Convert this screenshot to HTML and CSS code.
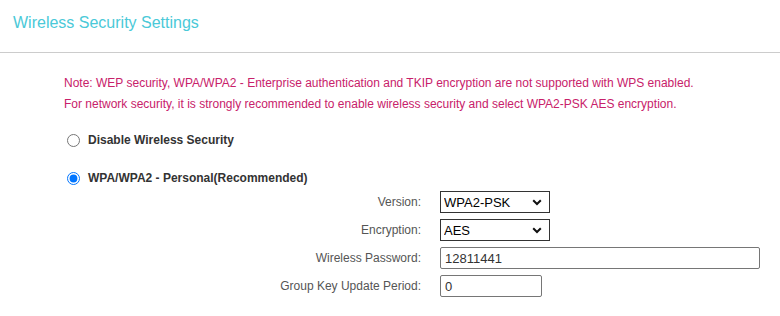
FILE: index.html
```html
<!DOCTYPE html>
<html>
<head>
<meta charset="utf-8">
<link rel="stylesheet" href="styles.css">
</head>
<body>
<div class="header"><h1 class="title">Wireless Security Settings</h1></div>
<div class="content">
  <div class="note">
    <p>Note: WEP security, WPA/WPA2 - Enterprise authentication and TKIP encryption are not supported with WPS enabled.</p>
    <p>For network security, it is strongly recommended to enable wireless security and select WPA2-PSK AES encryption.</p>
  </div>
  <label class="option opt-disable"><input type="radio" name="sec" class="radio"><span>Disable Wireless Security</span></label>
  <label class="option opt-wpa"><input type="radio" name="sec" class="radio" checked><span>WPA/WPA2 - Personal(Recommended)</span></label>
  <div class="form">
    <div class="lbl">Version:</div>
    <div class="sel-wrap">
      <select class="sel"><option>WPA2-PSK</option></select>
      <svg class="chev" width="10" height="7" viewBox="0 0 10 7"><path d="M1.2 1.2 L5 5 L8.8 1.2" fill="none" stroke="#111" stroke-width="2"/></svg>
    </div>
    <div class="lbl">Encryption:</div>
    <div class="sel-wrap">
      <select class="sel"><option>AES</option></select>
      <svg class="chev" width="10" height="7" viewBox="0 0 10 7"><path d="M1.2 1.2 L5 5 L8.8 1.2" fill="none" stroke="#111" stroke-width="2"/></svg>
    </div>
    <div class="lbl">Wireless Password:</div>
    <input class="txt txt-wide" type="text" value="12811441">
    <div class="lbl">Group Key Update Period:</div>
    <input class="txt txt-short" type="text" value="0">
  </div>
</div>
</body>
</html>
```

FILE: styles.css
```css
html, body {
  margin: 0;
  padding: 0;
  background: #fff;
  font-family: "Liberation Sans", Arial, sans-serif;
}
.header {
  height: 53px;
  border-bottom: 1px solid #cccccc;
  box-sizing: border-box;
  padding: 13px 0 0 13px;
}
.title {
  margin: 0;
  font-size: 16px;
  font-weight: normal;
  color: #4ac9d8;
  line-height: 20px;
}
.content {
  padding: 20px 0 0 64px;
  display: flex;
  flex-direction: column;
}
.note p {
  margin: 0;
  font-size: 12px;
  line-height: 21px;
  color: #c8216a;
}
.option {
  display: flex;
  align-items: center;
  font-size: 12px;
  font-weight: bold;
  color: #333;
  height: 16px;
}
.opt-disable { margin-top: 17px; }
.opt-wpa { margin-top: 22px; }
.radio {
  margin: 0 8px 0 3px;
  width: 13px;
  height: 13px;
}
.form {
  margin-top: 5px;
  display: grid;
  grid-template-columns: 357px auto;
  column-gap: 19px;
  row-gap: 6px;
  justify-items: start;
  align-items: center;
}
.lbl {
  justify-self: end;
  font-size: 12px;
  color: #555;
}
.sel-wrap {
  position: relative;
  width: 110px;
  height: 22px;
}
.sel {
  appearance: none;
  -webkit-appearance: none;
  width: 110px;
  height: 22px;
  margin: 0;
  border: 1px solid #333;
  border-radius: 0;
  background: #fff;
  font-family: "Liberation Sans", Arial, sans-serif;
  font-size: 13px;
  color: #000;
  padding: 0 0 0 3px;
}
.chev {
  position: absolute;
  right: 8px;
  top: 8px;
  pointer-events: none;
}
.txt {
  box-sizing: border-box;
  height: 22px;
  margin: 0;
  border: 1px solid #767676;
  border-radius: 2px;
  font-family: "Liberation Sans", Arial, sans-serif;
  font-size: 13px;
  color: #333;
  padding: 0 4px;
}
.txt-wide { width: 320px; }
.txt-short { width: 102px; }
```
